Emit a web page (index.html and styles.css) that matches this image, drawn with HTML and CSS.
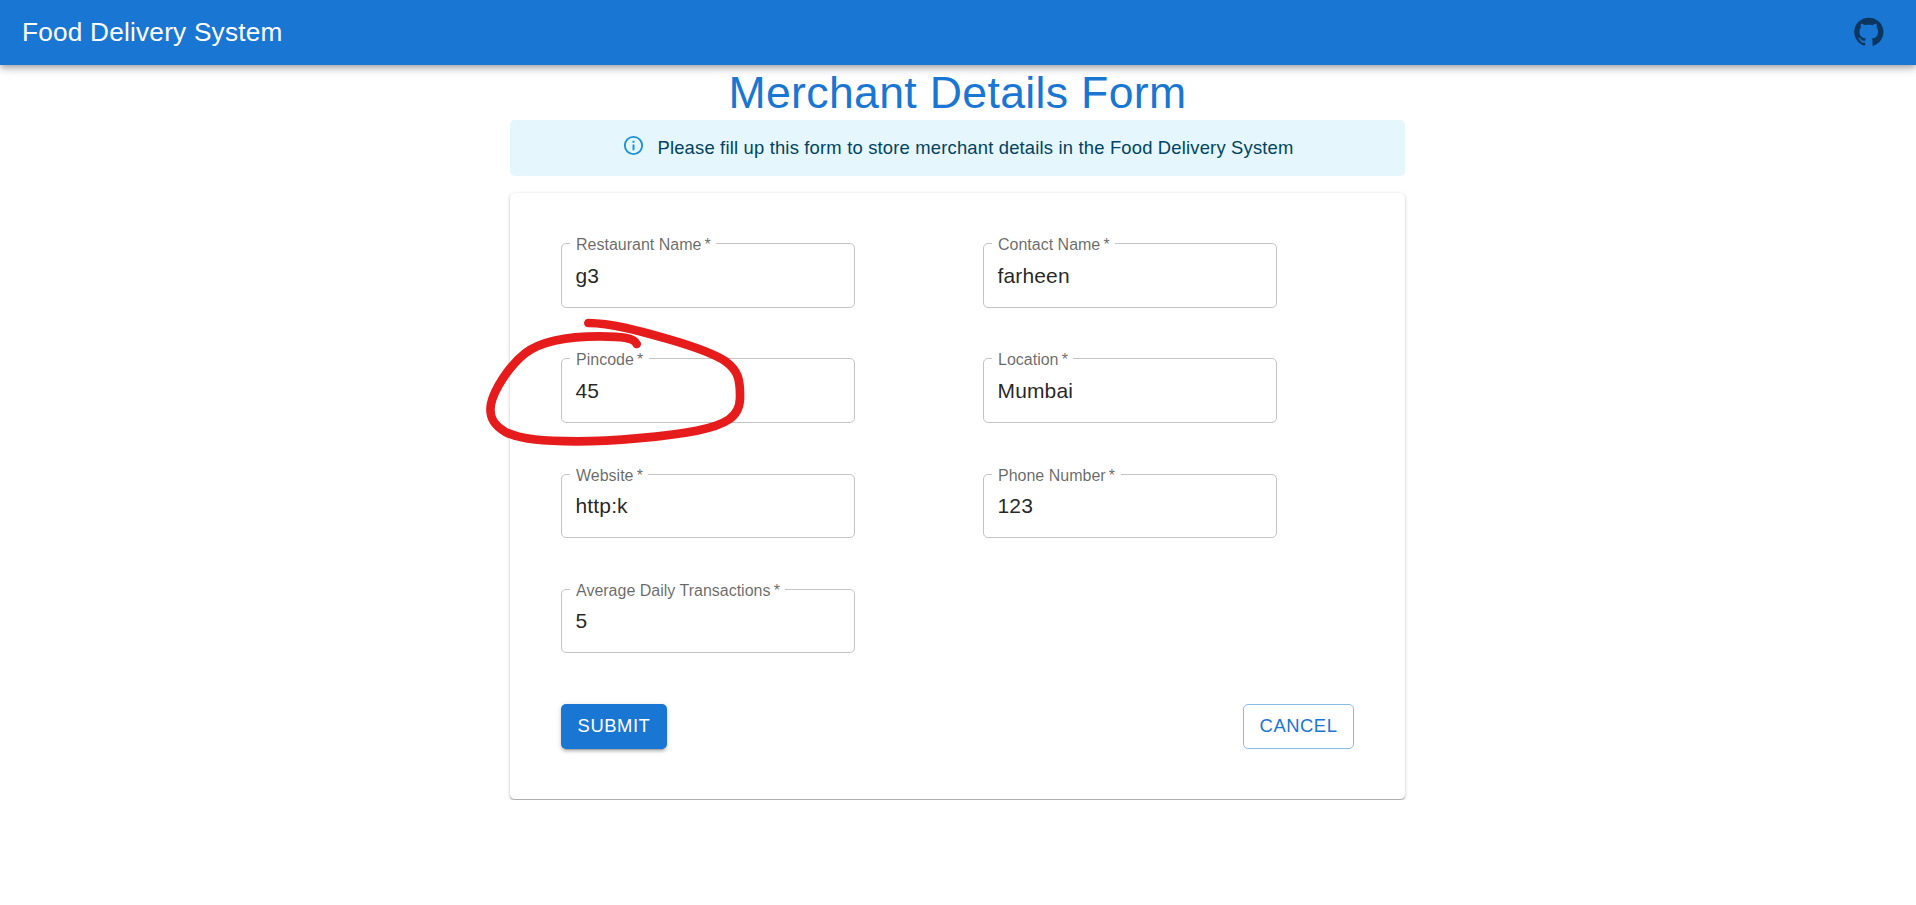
FILE: index.html
```html
<!DOCTYPE html>
<html lang="en">
<head>
<meta charset="utf-8">
<title>Food Delivery System</title>
<link rel="stylesheet" href="styles.css">
</head>
<body>
<header class="appbar">
  <div class="brand">Food Delivery System</div>
  <a class="github" aria-label="GitHub"><svg viewBox="0 0 24 24"><path d="M12 1.27a11 11 0 00-3.48 21.46c.55.09.73-.28.73-.55v-1.84c-3.03.64-3.67-1.46-3.67-1.46-.55-1.29-1.28-1.65-1.28-1.65-.92-.65.1-.65.1-.65 1.1 0 1.73 1.1 1.73 1.1.92 1.65 2.57 1.2 3.21.92a2 2 0 01.64-1.47c-2.47-.27-5.04-1.19-5.04-5.5 0-1.1.46-2.1 1.2-2.84a3.76 3.76 0 010-2.93s.91-.28 3.11 1.1c1.8-.49 3.7-.49 5.5 0 2.1-1.38 3.02-1.1 3.02-1.1a3.76 3.76 0 01.1 2.93c.83.74 1.2 1.74 1.2 2.94 0 4.21-2.57 5.13-5.04 5.4.45.37.82.92.82 2.02v3.03c0 .27.1.64.73.55A11 11 0 0012 1.27"/></svg></a>
</header>
<main class="page">
  <h1 class="title">Merchant Details Form</h1>
  <div class="alert">
    <svg class="alert-icon" viewBox="0 0 24 24"><path d="M11,9H13V7H11M12,20C7.59,20 4,16.41 4,12C4,7.59 7.59,4 12,4C16.41,4 20,7.59 20,12C20,16.41 16.41,20 12,20M12,2A10,10 0 0,0 2,12A10,10 0 0,0 12,22A10,10 0 0,0 22,12A10,10 0 0,0 12,2M11,17H13V11H11V17Z"/></svg>
    <div class="alert-text">Please fill up this form to store merchant details in the Food Delivery System</div>
  </div>
  <section class="card">
    <div class="fields">
      <div class="field"><span class="label">Restaurant Name&thinsp;*</span><span class="value">g3</span></div>
      <div class="field"><span class="label">Contact Name&thinsp;*</span><span class="value">farheen</span></div>
      <div class="field"><span class="label">Pincode&thinsp;*</span><span class="value">45</span></div>
      <div class="field"><span class="label">Location&thinsp;*</span><span class="value">Mumbai</span></div>
      <div class="field"><span class="label">Website&thinsp;*</span><span class="value">http:k</span></div>
      <div class="field"><span class="label">Phone Number&thinsp;*</span><span class="value">123</span></div>
      <div class="field"><span class="label">Average Daily Transactions&thinsp;*</span><span class="value">5</span></div>
    </div>
    <div class="actions">
      <button class="btn btn-submit">SUBMIT</button>
      <button class="btn btn-cancel">CANCEL</button>
    </div>
  </section>
</main>
<svg class="marker" viewBox="0 0 1200 840"><path d="M325 429C395 430 470 450 560 476C640 499 700 519 738 545C775 572 781 600 780 655C779 712 735 735 650 752C560 769 400 784 290 784C200 783 120 780 75 755C35 732 27 705 33 672C42 630 85 560 135 520C180 485 260 469 360 469C420 470 462 471 470 492"/></svg>
</body>
</html>
```
FILE: styles.css
```css
* { box-sizing: border-box; }
body {
  margin: 0;
  background: #fff;
  font-family: "Liberation Sans", Arial, sans-serif;
  color: rgba(0, 0, 0, 0.87);
}
.appbar {
  display: flex;
  align-items: center;
  justify-content: space-between;
  height: 65px;
  padding: 0 32px 2px 22px;
  background: #1976d2;
  box-shadow: 0 2px 5px -1px rgba(0,0,0,.2), 0 5px 6px rgba(0,0,0,.14), 0 1px 13px rgba(0,0,0,.12);
}
.brand { color: #fff; font-size: 26.2px; letter-spacing: 0.22px; line-height: 40px; }
.github { display: flex; color: rgba(0, 0, 0, 0.54); }
.github svg { width: 31.5px; height: 31.5px; fill: currentColor; }
.page { width: 896px; margin: 0 auto; padding-right: 1px; }
.title {
  margin: 0;
  height: 55px;
  line-height: 55px;
  text-align: center;
  font-size: 44.6px;
  font-weight: 400;
  letter-spacing: 0.33px;
  color: #1976d2;
}
.alert {
  display: flex;
  justify-content: center;
  height: 56px;
  padding: 14px 0 0 1px;
  border-radius: 5px;
  background: #e5f6fd;
}
.alert-icon { width: 23px; height: 23px; margin-right: 12px; fill: #1a90d8; }
.alert-text { font-size: 18.4px; line-height: 28px; letter-spacing: 0.187px; color: #014361; white-space: nowrap; }
.card {
  height: 607px;
  margin-top: 17px;
  padding: 50px 51px 0;
  border-bottom: 1px solid #b0b0b0;
  border-radius: 5px;
  background: #fff;
  box-shadow: 0 1px 2px rgba(0,0,0,.16), 0 1px 4px rgba(0,0,0,.14);
}
.fields {
  display: grid;
  grid-template-columns: 294px 294px;
  grid-auto-rows: 64.6px;
  column-gap: 128px;
  row-gap: 50.7px;
}
.field {
  position: relative;
  border: 1px solid #c4c4c4;
  border-radius: 5px;
  padding: 18.52px 13px 0 13.5px;
}
.label {
  position: absolute;
  top: -9px;
  left: 8px;
  padding: 0 5.5px 0 6px;
  background: #fff;
  font-size: 16px;
  line-height: 20px;
  color: rgba(0, 0, 0, 0.6);
  white-space: nowrap;
}
.value { display: block; font-size: 21px; line-height: 25px; letter-spacing: 0.15px; }
.actions { display: flex; justify-content: space-between; margin-top: 50.5px; }
.btn {
  height: 45px;
  padding: 0 0 1px;
  border: 0;
  border-radius: 5px;
  font: 400 18.4px/44px "Liberation Sans", Arial, sans-serif;
  letter-spacing: 0.55px;
}
.btn-submit {
  width: 106px;
  color: #fff;
  background: #1976d2;
  box-shadow: 0 4px 1px -3px rgba(0,0,0,.2), 0 2.6px 2.6px rgba(0,0,0,.14), 0 1px 6px rgba(0,0,0,.12);
}
.btn-cancel { width: 111px; border: 1px solid #8cbae8; line-height: 42px; color: #1976d2; background: #fff; }
.marker {
  position: absolute;
  left: 480px;
  top: 180px;
  width: 400px;
  height: 280px;
  fill: none;
  stroke: #e61c1c;
  stroke-width: 26;
  stroke-linecap: round;
  stroke-linejoin: round;
}
```
